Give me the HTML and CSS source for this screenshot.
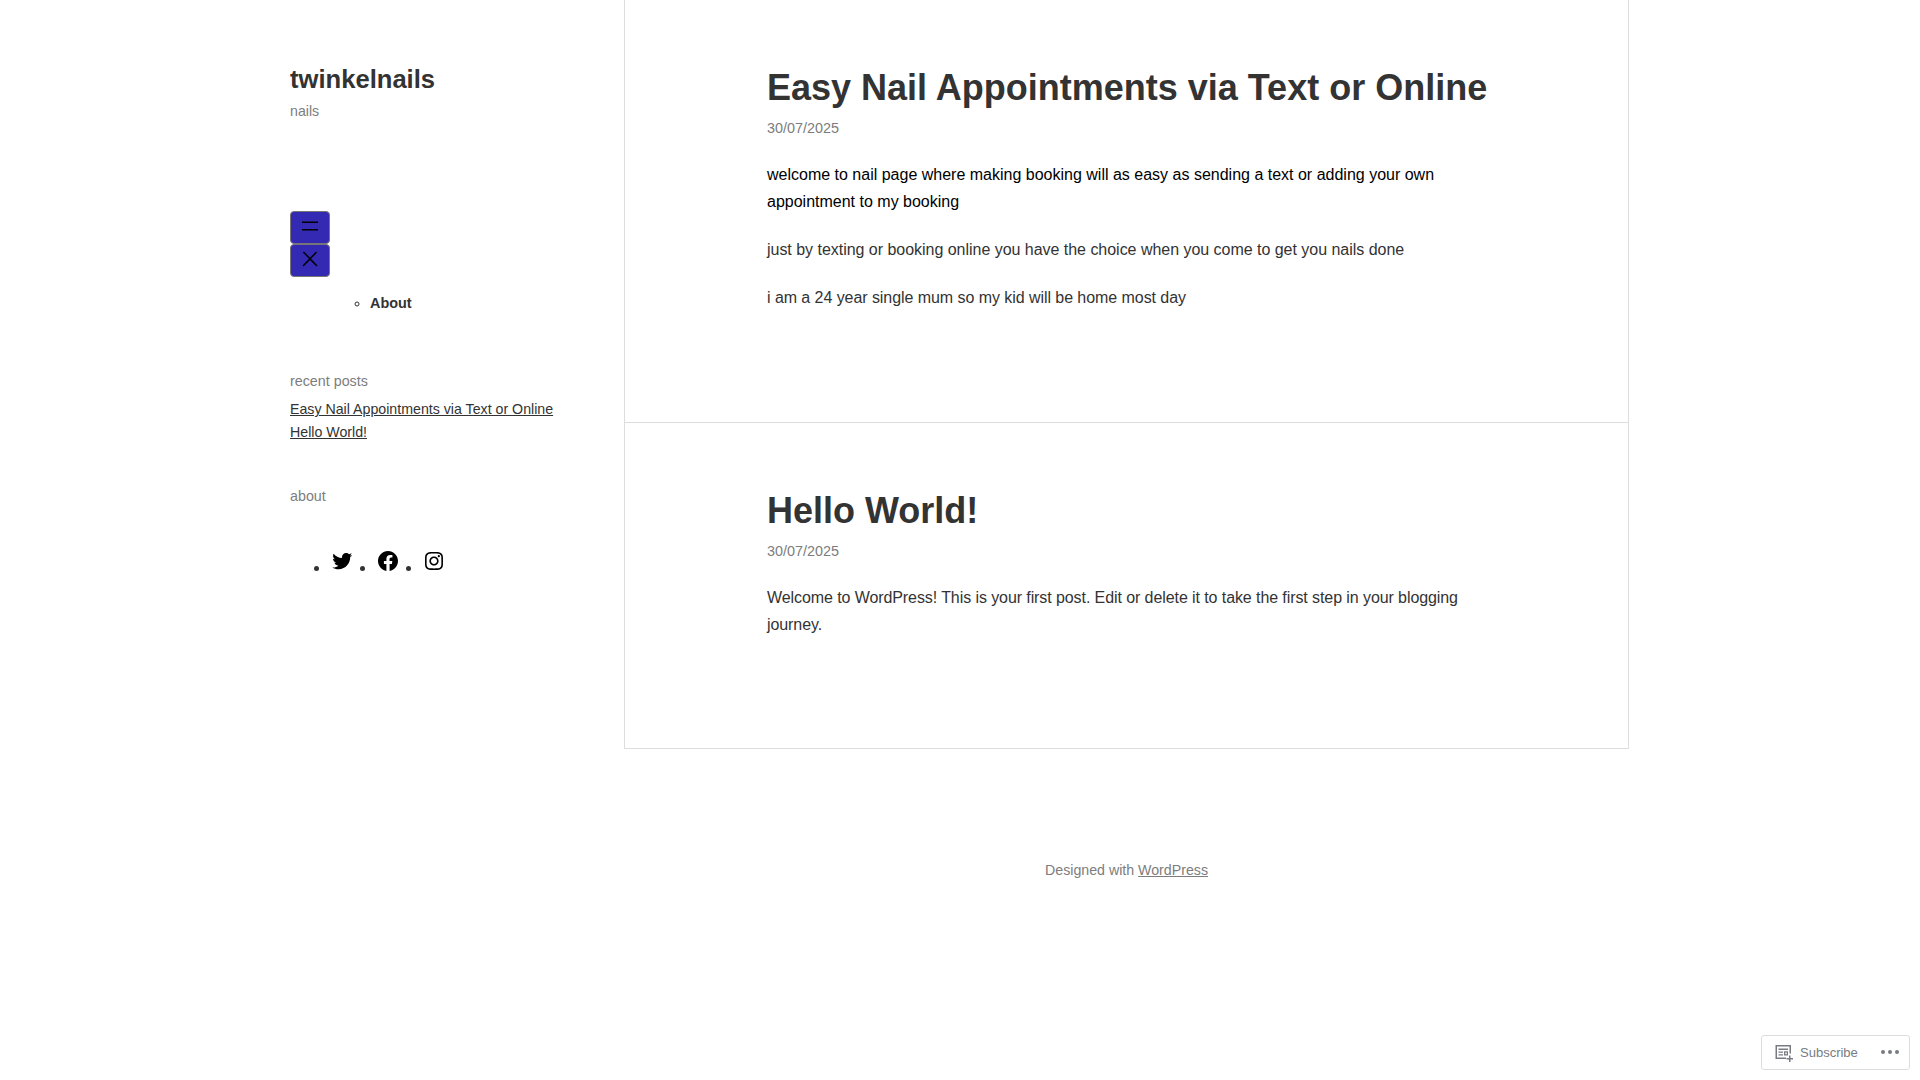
FILE: index.html
```
<!DOCTYPE html>
<html lang="en">
<head>
    <meta charset="UTF-8">
    <meta name="viewport" content="width=device-width, initial-scale=1.0">
    <title>twinkelnails</title>
    <link rel="stylesheet" href="styles.css">
</head>
<body>
    <div class="site">
        <aside class="sidebar">
            <h1 class="site-title">twinkelnails</h1>
            <p class="tagline">nails</p>

            <nav class="navigation">
                <button type="button" class="nav-button" aria-label="Open menu">
                    <svg width="24" height="24" viewBox="0 0 24 24"><rect x="4" y="7.5" width="16" height="1.5"/><rect x="4" y="15" width="16" height="1.5"/></svg>
                </button>
                <button type="button" class="nav-button" aria-label="Close menu">
                    <svg width="24" height="24" viewBox="0 0 24 24"><path d="M13 11.8l6.1-6.3-1-1-6.1 6.2-6.1-6.2-1 1 6.1 6.3-6.5 6.7 1 1 6.5-6.6 6.5 6.6 1-1z"/></svg>
                </button>
                <ul class="menu">
                    <li><a href="#">About</a></li>
                </ul>
            </nav>

            <h2 class="widget-title">recent posts</h2>
            <ul class="recent-posts">
                <li><a href="#">Easy Nail Appointments via Text or Online</a></li>
                <li><a href="#">Hello World!</a></li>
            </ul>

            <h2 class="widget-title">about</h2>
            <ul class="social">
                <li><a href="#" aria-label="Twitter"><svg width="24" height="24" viewBox="0 0 24 24"><path d="M22.23,5.924c-0.736,0.326-1.527,0.547-2.357,0.646c0.847-0.508,1.498-1.312,1.804-2.27 c-0.793,0.47-1.671,0.812-2.606,0.996C18.324,4.498,17.257,4,16.077,4c-2.266,0-4.103,1.837-4.103,4.103 c0,0.322,0.036,0.635,0.106,0.935C8.67,8.867,5.647,7.234,3.623,4.751C3.27,5.357,3.067,6.062,3.067,6.814 c0,1.424,0.724,2.679,1.825,3.415c-0.673-0.021-1.305-0.206-1.859-0.513c0,0.017,0,0.034,0,0.052c0,1.988,1.414,3.647,3.292,4.023 c-0.344,0.094-0.707,0.144-1.081,0.144c-0.264,0-0.521-0.026-0.772-0.074c0.522,1.63,2.038,2.816,3.833,2.85 c-1.404,1.1-3.174,1.756-5.096,1.756c-0.331,0-0.658-0.019-0.979-0.057c1.816,1.164,3.973,1.843,6.29,1.843 c7.547,0,11.675-6.252,11.675-11.675c0-0.178-0.004-0.355-0.012-0.531C20.985,7.47,21.68,6.747,22.23,5.924z"/></svg></a></li>
                <li><a href="#" aria-label="Facebook"><svg width="24" height="24" viewBox="0 0 24 24"><path d="M12 2C6.5 2 2 6.5 2 12c0 5 3.7 9.1 8.4 9.9v-7H7.9V12h2.5V9.8c0-2.5 1.5-3.9 3.8-3.9 1.1 0 2.2.2 2.2.2v2.5h-1.3c-1.2 0-1.6.8-1.6 1.6V12h2.8l-.4 2.9h-2.3v7C18.3 21.1 22 17 22 12c0-5.5-4.5-10-10-10z"/></svg></a></li>
                <li><a href="#" aria-label="Instagram"><svg width="24" height="24" viewBox="0 0 24 24"><path d="M12,4.622c2.403,0,2.688,0.009,3.637,0.052c0.877,0.04,1.354,0.187,1.671,0.31c0.42,0.163,0.72,0.358,1.035,0.673 c0.315,0.315,0.51,0.615,0.673,1.035c0.123,0.317,0.27,0.794,0.31,1.671c0.043,0.949,0.052,1.234,0.052,3.637 s-0.009,2.688-0.052,3.637c-0.04,0.877-0.187,1.354-0.31,1.671c-0.163,0.42-0.358,0.72-0.673,1.035 c-0.315,0.315-0.615,0.51-1.035,0.673c-0.317,0.123-0.794,0.27-1.671,0.31c-0.949,0.043-1.233,0.052-3.637,0.052 s-2.688-0.009-3.637-0.052c-0.877-0.04-1.354-0.187-1.671-0.31c-0.42-0.163-0.72-0.358-1.035-0.673 c-0.315-0.315-0.51-0.615-0.673-1.035c-0.123-0.317-0.27-0.794-0.31-1.671C4.631,14.688,4.622,14.403,4.622,12 s0.009-2.688,0.052-3.637c0.04-0.877,0.187-1.354,0.31-1.671c0.163-0.42,0.358-0.72,0.673-1.035 c0.315-0.315,0.615-0.51,1.035-0.673c0.317-0.123,0.794-0.27,1.671-0.31C9.312,4.631,9.597,4.622,12,4.622 M12,3 C9.556,3,9.249,3.01,8.289,3.054C7.331,3.098,6.677,3.25,6.105,3.472C5.513,3.702,5.011,4.01,4.511,4.511 c-0.5,0.5-0.808,1.002-1.038,1.594C3.25,6.677,3.098,7.331,3.054,8.289C3.01,9.249,3,9.556,3,12c0,2.444,0.01,2.751,0.054,3.711 c0.044,0.958,0.196,1.612,0.418,2.185c0.23,0.592,0.538,1.094,1.038,1.594c0.5,0.5,1.002,0.808,1.594,1.038 c0.572,0.222,1.227,0.375,2.185,0.418C9.249,20.99,9.556,21,12,21s2.751-0.01,3.711-0.054c0.958-0.044,1.612-0.196,2.185-0.418 c0.592-0.23,1.094-0.538,1.594-1.038c0.5-0.5,0.808-1.002,1.038-1.594c0.222-0.572,0.375-1.227,0.418-2.185 C20.99,14.751,21,14.444,21,12s-0.01-2.751-0.054-3.711c-0.044-0.958-0.196-1.612-0.418-2.185c-0.23-0.592-0.538-1.094-1.038-1.594 c-0.5-0.5-1.002-0.808-1.594-1.038c-0.572-0.222-1.227-0.375-2.185-0.418C14.751,3.01,14.444,3,12,3L12,3z M12,7.378 c-2.552,0-4.622,2.069-4.622,4.622S9.448,16.622,12,16.622s4.622-2.069,4.622-4.622S14.552,7.378,12,7.378z M12,15 c-1.657,0-3-1.343-3-3s1.343-3,3-3s3,1.343,3,3S13.657,15,12,15z M16.804,6.116c-0.596,0-1.08,0.484-1.08,1.08 s0.484,1.08,1.08,1.08c0.596,0,1.08-0.484,1.08-1.08S17.401,6.116,16.804,6.116z"/></svg></a></li>
            </ul>
        </aside>

        <main class="content">
            <article class="post">
                <h2 class="post-title">Easy Nail Appointments via Text or Online</h2>
                <p class="post-date">30/07/2025</p>
                <p class="intro">welcome to nail page where making booking will as easy as sending a text or adding your own appointment to my booking</p>
                <p>just by texting or booking online you have the choice when you come to get you nails done</p>
                <p class="snug">i am a 24 year single mum so my kid will be home most day</p>
            </article>
            <article class="post">
                <h2 class="post-title">Hello World!</h2>
                <p class="post-date">30/07/2025</p>
                <p class="tight">Welcome to WordPress! This is your first post. Edit or delete it to take the first step in your blogging journey.</p>
            </article>
            <footer class="footer">Designed with <a href="#">WordPress</a></footer>
        </main>
    </div>

    <div class="actionbar">
        <svg class="follow-icon" width="20" height="20" viewBox="0 0 20 20"><path fill-rule="evenodd" d="M1.500 2H17v8.500h-1.500v-7H3v11h9V16H1.500z"/><path d="M4.500 5.500H14V7H4.500zM4.500 8.500H9v1.300H4.500zM4.500 11.300H9v1.300H4.500z"/><path fill-rule="evenodd" d="M10 8.300h4v4.300h-4zM11.300 9.600v1.700h1.500V9.600z"/><path d="M15 12.500h1.500V15H19v1.500h-2.500V19H15v-2.500h-2.500V15H15z"/></svg>
        <span class="follow-label">Subscribe</span>
        <svg class="dots-icon" width="20" height="6" viewBox="0 0 20 6"><circle cx="3" cy="3" r="2"/><circle cx="10" cy="3" r="2"/><circle cx="17" cy="3" r="2"/></svg>
    </div>
</body>
</html>
```
FILE: styles.css
```
* {
    box-sizing: border-box;
}
body {
    margin: 0;
    background-color: #fff;
    color: #333;
    font-family: "Liberation Sans", Arial, sans-serif;
    font-size: 16px;
    line-height: 27px;
}
h1, h2, p, ul {
    margin: 0;
    padding: 0;
}
a {
    color: inherit;
}
svg {
    fill: currentColor;
}
.site {
    display: flex;
    width: 1339px;
    margin-left: 290px;
}
.sidebar {
    width: 334px;
    padding-top: 63px;
    font-size: 14.2px;
    line-height: 23px;
}
.site-title {
    font-size: 25.6px;
    line-height: 32px;
}
.tagline {
    margin-top: 5px;
    color: #7d7d7d;
}
.navigation {
    margin-top: 88px;
}
.nav-button {
    display: block;
    width: 40px;
    height: 33px;
    padding: 2px 7px 5px;
    border: 1px solid #767676;
    border-radius: 4px;
    background-color: #3329b3;
    color: #000;
}
.nav-button svg {
    display: block;
}
.menu {
    margin-top: 15px;
    padding-left: 80px;
    font-size: 14.4px;
    list-style: circle;
}
.menu a {
    font-weight: bold;
    text-decoration: none;
}
.widget-title {
    margin-top: 55px;
    color: #7d7d7d;
    font-size: 14.3px;
    font-weight: normal;
}
.recent-posts {
    margin-top: 5px;
    list-style: none;
}
.recent-posts + .widget-title {
    margin-top: 41px;
}
.social {
    display: flex;
    gap: 22px;
    margin-top: 41px;
    padding-left: 40px;
    font-size: 16px;
}
.social li {
    width: 24px;
}
.social a {
    color: #000;
}
.content {
    width: 1005px;
}
.post {
    padding: 66px 142px 111px;
    border: 1px solid #ddd;
    border-top: none;
}
.post + .post {
    padding-bottom: 110px;
}
.post p {
    letter-spacing: -0.027px;
}
.post p + p {
    margin-top: 21px;
}
.post .snug {
    letter-spacing: -0.06px;
}
.post .tight {
    letter-spacing: -0.086px;
}
.post .post-title {
    font-size: 36px;
    line-height: 44px;
    white-space: nowrap;
}
.post .post-date {
    margin-top: 7px;
    color: #7d7d7d;
    font-size: 14.4px;
    letter-spacing: normal;
    line-height: 23px;
}
.post .intro {
    color: #000;
    letter-spacing: normal;
}
.footer {
    margin-top: 110px;
    color: #7d7d7d;
    font-size: 14.2px;
    line-height: 23px;
    text-align: center;
}
.actionbar {
    position: fixed;
    right: 10px;
    bottom: 10px;
    display: flex;
    align-items: center;
    width: 149px;
    height: 35px;
    padding-left: 12px;
    border: 1px solid #dcdcde;
    border-radius: 3px;
    background-color: #fff;
    color: #787c82;
    font-size: 13px;
}
.follow-label {
    margin-left: 6px;
}
.dots-icon {
    margin-bottom: 1px;
    margin-left: 22px;
}
```
